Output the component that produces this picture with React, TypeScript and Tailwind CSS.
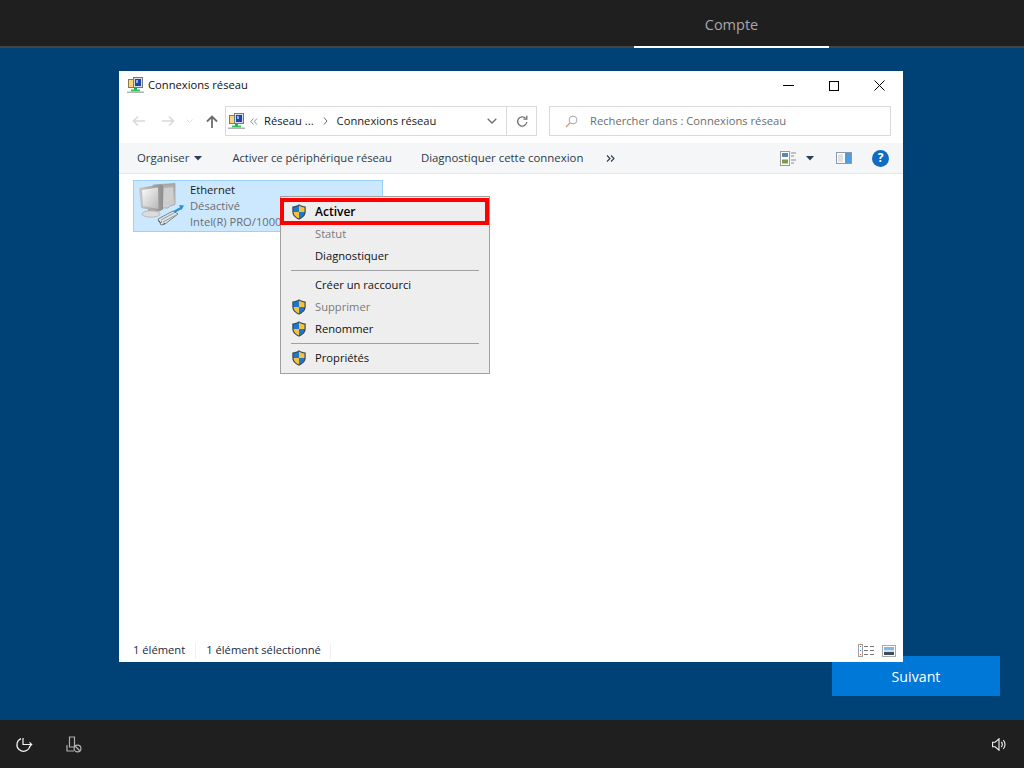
const font = { fontFamily: '"Open Sans", "Noto Sans", sans-serif' };

function Shield({ size = 16 }: { size?: number }) {
  return (
    <svg width={size} height={size} viewBox="1 0 14 16" className="shrink-0">
      <path d="M8 .3C6 1.8 4 2.4 1.3 2.4v5.4c0 3.6 2.8 6.2 6.7 7.9 3.9-1.7 6.7-4.3 6.7-7.9V2.4C12 2.4 10 1.8 8 .3z" fill="#3b4654" />
      <path d="M8 1.6v6.3H2.5V3.5C4.6 3.4 6.4 2.8 8 1.6z" fill="#1b78d0" />
      <path d="M8 1.6v6.3h5.5V3.5C11.4 3.4 9.6 2.8 8 1.6z" fill="#f5c33b" />
      <path d="M2.5 7.9H8v6.5C5 13.2 2.6 11 2.5 7.9z" fill="#f5c33b" />
      <path d="M13.5 7.9H8v6.5c3-1.2 5.4-3.4 5.5-6.5z" fill="#1b78d0" />
    </svg>
  );
}

function NetIcon() {
  return (
    <svg width={17} height={17} viewBox="0 0 17 17" className="shrink-0">
      <rect x="1.5" y="2.5" width="6" height="8" fill="#f4d67c" stroke="#8d7a45" />
      <rect x="6.5" y=".5" width="9" height="10" fill="#d8dde3" stroke="#6f7a86" />
      <rect x="8" y="2" width="6" height="7" fill="#1c46ad" />
      <rect x="9" y="3" width="2" height="3" fill="#8fb0e8" />
      <rect x="7" y="10.5" width="3" height="3" fill="#1fae4a" />
      <rect x="4" y="12.5" width="9" height="2" fill="#2ec35f" />
      <rect x="0" y="14.5" width="17" height="1.5" fill="#aeb4ba" />
    </svg>
  );
}

function BigIcon() {
  return (
    <svg width={48} height={46} viewBox="0 0 48 46">
      <defs>
        <linearGradient id="scr" x1="0" y1="0" x2="1" y2="1">
          <stop offset="0" stopColor="#fbfbfb" />
          <stop offset="1" stopColor="#b8b8b8" />
        </linearGradient>
        <linearGradient id="bez" x1="0" y1="0" x2="1" y2="0">
          <stop offset="0" stopColor="#c9c9c9" />
          <stop offset="1" stopColor="#8e8e8e" />
        </linearGradient>
        <linearGradient id="back" x1="0" y1="0" x2="0" y2="1">
          <stop offset="0" stopColor="#a9a9a9" />
          <stop offset="1" stopColor="#d4d4d4" />
        </linearGradient>
      </defs>
      <path d="M16 3l22-1.5v21L33 24l-2 2H21z" fill="url(#back)" stroke="#9a9a9a" strokeWidth=".7" />
      <path d="M27 6l9-.7v14l-9 1.2z" fill="#cfcfcf" />
      <path d="M2 6l21-3.5 3 1v24l-4 2L4 26z" fill="url(#bez)" />
      <path d="M5 8l16-2.5.5 21.5L6 24z" fill="url(#scr)" />
      <path d="M11 27l8 2v3l-8-1z" fill="#a5a5a5" />
      <ellipse cx="14" cy="32" rx="9" ry="3.2" fill="#dcdcdc" stroke="#a8a8a8" strokeWidth=".7" />
      <path d="M21 37l15-8 5 3-13 10-4 1z" fill="#dfe4e4" stroke="#5f6c6e" strokeWidth=".8" />
      <path d="M24 38l13-7M26 40l13-7" stroke="#7a8b8d" strokeWidth=".8" />
      <path d="M23 41l2-1.5M26 42.5l2-1.5M21 38.5l2 1.5" stroke="#3f4c50" strokeWidth=".9" />
      <path d="M37 30l7-4" stroke="#2a8fd8" strokeWidth="2.4" />
      <path d="M42 23l5 .5-2.5 4.5z" fill="#2a8fd8" />
    </svg>
  );
}

function MenuRow({ label, shield, disabled, bold }: { label: string; shield?: boolean; disabled?: boolean; bold?: boolean }) {
  return (
    <div className="flex h-[22px] items-center">
      <div className="flex w-[34px] justify-center pl-[1px]">{shield && <Shield />}</div>
      <span className={`${bold ? "text-[12px] font-semibold text-black" : ""} ${disabled ? "text-[#7a7a7a]" : "text-[#111111]"}`}>{label}</span>
    </div>
  );
}

function Sep() {
  return (
    <div className="flex h-[7px] items-center pl-[10px] pr-[10px]">
      <div className="h-px w-full bg-[#a0a0a0]" />
    </div>
  );
}

export default function App() {
  return (
    <div className="flex h-[768px] w-[1024px] flex-col overflow-hidden bg-[#004275]" style={font}>
      <header className="flex h-[48px] shrink-0 justify-end border-b-2 border-[#444444] bg-[#1f1f1f] pr-[195px]">
        <div className="relative flex h-[48px] w-[195px] items-center justify-center border-b-2 border-white pt-[4px] text-[14.5px] text-[#a8a8a8]">
          Compte
        </div>
      </header>

      <main className="relative flex flex-1 items-end justify-end pb-[24px] pr-[24px]">
        <button className="flex h-[40px] w-[168px] items-center justify-center bg-[#0078d7] pt-[1px] text-[14.2px] text-white">Suivant</button>

        <section className="absolute left-[119px] top-[23px] flex h-[591px] w-[784px] flex-col bg-white text-[11.2px] text-[#1a1a1a]">
          <div className="flex h-[29px] shrink-0 items-center pl-[8px]">
            <NetIcon />
            <span className="ml-[4px] text-[#111111]">Connexions réseau</span>
            <div className="ml-auto flex h-full items-center">
              <div className="flex w-[46px] justify-center">
                <div className="h-px w-[11px] bg-black" />
              </div>
              <div className="flex w-[46px] justify-center">
                <div className="h-[10px] w-[10px] border border-black" />
              </div>
              <div className="flex w-[46px] justify-center pr-[1px]">
                <svg width="11" height="11" viewBox="0 0 11 11"><path d="M.5.5l10 10M10.5.5l-10 10" stroke="#000" strokeWidth="1" /></svg>
              </div>
            </div>
          </div>

          <div className="flex h-[43px] shrink-0 items-start pt-[6px]">
            <div className="flex h-[30px] w-[106px] shrink-0 items-center pl-[13px]">
              <svg width="14" height="12" viewBox="0 0 14 12"><path d="M13 6H2M6 1.5L1.5 6 6 10.5" fill="none" stroke="#d9d9d9" strokeWidth="1.6" /></svg>
              <svg width="14" height="12" viewBox="0 0 14 12" className="ml-[15px]"><path d="M1 6h11M8 1.5L12.5 6 8 10.5" fill="none" stroke="#d9d9d9" strokeWidth="1.6" /></svg>
              <svg width="7" height="5" viewBox="0 0 7 5" className="ml-[11px]"><path d="M.5.5l3 3 3-3" fill="none" stroke="#dcdcdc" /></svg>
              <svg width="12" height="13" viewBox="0 0 12 13" className="ml-[13px] mt-[1px]"><path d="M6 13V2M1 6.5L6 1.5 11 6.5" fill="none" stroke="#6d6d6d" strokeWidth="1.8" /></svg>
            </div>
            <div className="flex h-[30px] w-[312px] shrink-0 items-center border border-[#d9d9d9]">
              <div className="ml-[2px]"><NetIcon /></div>
              <svg width="8" height="7" viewBox="0 0 8 7" className="ml-[5px]"><path d="M3.5.5L.8 3.5l2.7 3M7 .5L4.3 3.5 7 6.5" fill="none" stroke="#8a8a8a" /></svg>
              <span className="ml-[6px]">Réseau ...</span>
              <svg width="5" height="8" viewBox="0 0 5 8" className="ml-[9px]"><path d="M1 .5l3 3.5-3 3.5" fill="none" stroke="#6a6a6a" /></svg>
              <span className="ml-[9px]">Connexions réseau</span>
              <svg width="10" height="6" viewBox="0 0 10 6" className="ml-auto mr-[9px]"><path d="M.7.7L5 5 9.3.7" fill="none" stroke="#6f6f6f" strokeWidth="1.3" /></svg>
              <div className="flex h-full w-[30px] items-center justify-center border-l border-[#d9d9d9]">
                <svg width="12" height="13" viewBox="0 0 12 13"><path d="M9.5 3.2A4.6 4.6 0 1 0 10.8 7" fill="none" stroke="#6f6f6f" strokeWidth="1.3" /><path d="M10.8 .8v3.4H7.4" fill="none" stroke="#6f6f6f" strokeWidth="1.3" /></svg>
              </div>
            </div>
            <div className="ml-[12px] flex h-[30px] w-[342px] shrink-0 items-center border border-[#d9d9d9] text-[#6d6d6d]">
              <svg width="13" height="13" viewBox="0 0 13 13" className="ml-[15px]"><circle cx="8" cy="5" r="3.9" fill="none" stroke="#a8a8a8" /><path d="M5 8L1 12" stroke="#c99b7c" strokeWidth="1.2" /></svg>
              <span className="ml-[12px]">Rechercher dans : Connexions réseau</span>
            </div>
          </div>

          <div className="flex h-[31px] shrink-0 items-center border-b border-[#e6e6e6] bg-[#f5f6f7] pl-[18px] text-[#2c3a4a]">
            <span className="text-[11.4px]">Organiser</span>
            <svg width="8" height="5" viewBox="0 0 8 5" className="ml-[5px]"><path d="M0 0h8L4 4.5z" fill="#2c3e55" /></svg>
            <span className="ml-[30px]">Activer ce périphérique réseau</span>
            <span className="ml-[29px] text-[11.4px]">Diagnostiquer cette connexion</span>
            <svg width="9" height="7" viewBox="0 0 9 7" className="ml-[23px]"><path d="M1 .5l3 3-3 3M5 .5l3 3-3 3" fill="none" stroke="#2c3a4a" strokeWidth="1.1" /></svg>
            <div className="ml-auto flex items-center pr-[14px]">
              <svg width="16" height="15" viewBox="0 0 16 15">
                <rect x=".5" y=".5" width="9" height="14" fill="#fff" stroke="#9a9a9a" />
                <rect x="2" y="2" width="6" height="4" fill="#5b86b8" />
                <rect x="2" y="8.5" width="6" height="4" fill="#7d9a4c" />
                <path d="M11 2h5M11 5h3M11 9h5M11 12h3" stroke="#8a8a8a" />
              </svg>
              <svg width="8" height="5" viewBox="0 0 8 5" className="ml-[10px]"><path d="M0 0h8L4 4.5z" fill="#2c3e55" /></svg>
              <svg width="16" height="12" viewBox="0 0 16 12" className="ml-[22px]">
                <rect x=".5" y=".5" width="15" height="11" fill="#fff" stroke="#8f9aa5" />
                <rect x="2" y="2" width="5" height="8" fill="#dfe4ea" />
                <rect x="9" y="1" width="6" height="10" fill="#4f9be0" />
              </svg>
              <div className="ml-[20px] flex h-[17px] w-[17px] items-center justify-center rounded-full bg-[#0f6cc4] text-[12px] font-bold leading-none text-white">?</div>
            </div>
          </div>

          <div className="relative flex-1 pl-[14px] pt-[6px]">
            <div className="flex h-[52px] w-[250px] border border-[#99d1ff] bg-[#cce8ff] pl-[3px]">
              <div className="flex w-[53px] shrink-0 items-start pt-[1px]"><BigIcon /></div>
              <div className="flex flex-col pt-[1px] leading-[16px] whitespace-nowrap">
                <span className="text-[#1a1a1a]">Ethernet</span>
                <span className="text-[#6d6d6d]">Désactivé</span>
                <span className="text-[#6d6d6d]">Intel(R) PRO/1000 MT</span>
              </div>
            </div>

            <div className="absolute left-[161px] top-[22px] h-[178px] w-[210px] border border-[#a0a0a0] bg-[#eeeeee] py-[4px]">
              <MenuRow label="Activer" shield bold />
              <MenuRow label="Statut" disabled />
              <MenuRow label="Diagnostiquer" />
              <Sep />
              <MenuRow label="Créer un raccourci" />
              <MenuRow label="Supprimer" shield disabled />
              <MenuRow label="Renommer" shield />
              <Sep />
              <MenuRow label="Propriétés" shield />
              <div className="absolute left-[-1px] top-[1px] h-[27px] w-[209px] border-[4px] border-[#ff0000]" />
            </div>
          </div>

          <div className="flex h-[24px] shrink-0 items-center pl-[14px] pt-[1px] text-[#1a2a44]">
            <span>1 élément</span>
            <div className="ml-[10px] h-[16px] w-px bg-[#f0f0f0]" />
            <span className="ml-[10px]">1 élément sélectionné</span>
            <div className="ml-[9px] h-[16px] w-px bg-[#f0f0f0]" />
            <div className="ml-auto flex items-center pr-[7px]">
              <svg width="17" height="13" viewBox="0 0 17 13">
                <rect x=".5" y=".5" width="4" height="12" fill="#fff" stroke="#a0a0a0" />
                <rect x="2" y="2" width="1" height="1" fill="#666" /><rect x="2" y="6" width="1" height="1" fill="#3f8fd8" /><rect x="2" y="10" width="1" height="1" fill="#d84b3f" />
                <path d="M6 2.5h4M12 2.5h4M6 6.5h4M12 6.5h4M6 10.5h4M12 10.5h4" stroke="#777" />
              </svg>
              <svg width="14" height="12" viewBox="0 0 14 12" className="ml-[7px]">
                <rect x=".5" y=".5" width="13" height="11" fill="#fff" stroke="#a8a8a8" />
                <rect x="2" y="2" width="10" height="3" fill="#7fb8e6" />
                <rect x="2" y="5" width="10" height="2" fill="#cfe0ee" />
                <rect x="2" y="7" width="10" height="3" fill="#3c4c5e" />
              </svg>
            </div>
          </div>
        </section>
      </main>

      <footer className="flex h-[48px] shrink-0 items-center bg-[#1f1f1f] pl-[15px] pr-[18px]">
        <svg width="18" height="17" viewBox="0 0 18 17">
          <path d="M6 2.6A6.6 6.6 0 1 0 15 10" fill="none" stroke="#f2f2f2" strokeWidth="1.2" />
          <path d="M8 2v6.5h8.5M14.5 6.4l2.2 2.1-2.2 2.1" fill="none" stroke="#f2f2f2" strokeWidth="1.2" />
        </svg>
        <svg width="16" height="17" viewBox="0 0 16 17" className="ml-[33px]">
          <path d="M3.5 1h5v10h-5zM1 9v6h7" fill="none" stroke="#b0b0b0" strokeWidth="1.2" />
          <circle cx="11.5" cy="12.5" r="3.4" fill="none" stroke="#b0b0b0" strokeWidth="1.2" />
          <path d="M9 10l5 5" stroke="#b0b0b0" strokeWidth="1.2" />
        </svg>
        <svg width="14" height="13" viewBox="0 0 14 13" className="ml-auto">
          <path d="M.6 4.2h2.6L7 .8v11.4L3.2 8.8H.6z" fill="none" stroke="#f2f2f2" strokeWidth="1.1" />
          <path d="M9.3 4a3.5 3.5 0 0 1 0 5M11.2 2.2a6 6 0 0 1 0 8.6" fill="none" stroke="#f2f2f2" strokeWidth="1.1" />
        </svg>
      </footer>
    </div>
  );
}
